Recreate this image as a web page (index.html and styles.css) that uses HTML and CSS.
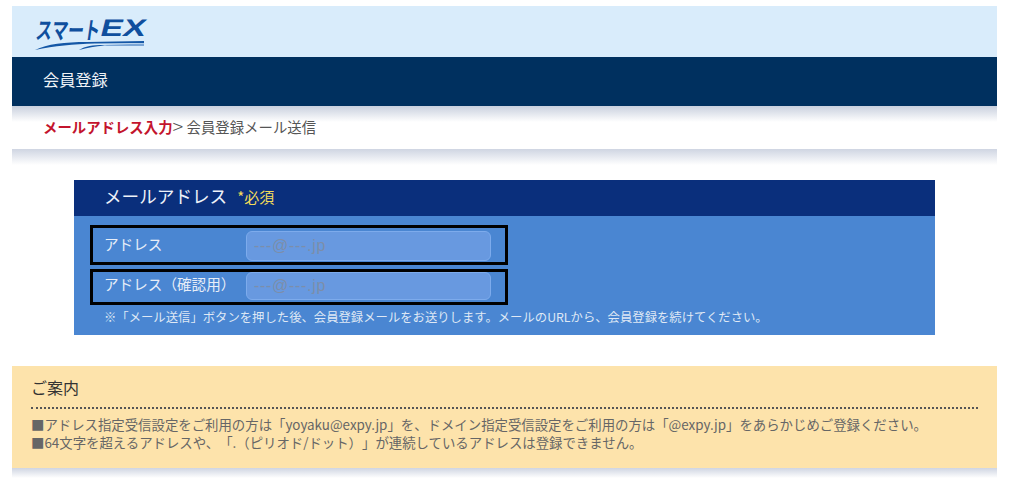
FILE: index.html
```html
<!DOCTYPE html>
<html lang="ja">
<head>
<meta charset="utf-8">
<title>会員登録</title>
<link rel="stylesheet" href="styles.css">
</head>
<body>
<div class="page">
  <header class="brand">
    <svg class="logo" width="112" height="38" viewBox="0 0 112 38" aria-label="スマートEX">
      <text class="logo-kana" transform="translate(0 23.500) skewX(-8) scale(1 1.4)" textLength="64" lengthAdjust="spacingAndGlyphs">スマート</text>
      <text class="logo-ex" transform="translate(64 21) skewX(-14)" textLength="45" lengthAdjust="spacingAndGlyphs">EX</text>
      <path class="logo-swoosh" d="M0 35 C12 29 30 27 52 27 L109 26 L109 28 L60 28.500 C38 29 20 31 0 35Z"/>
      <path class="logo-swoosh" d="M44 35 C50 31 58 30 68 30 L70 30.500 C60 31 52 33 44 35Z"/>
      <path class="logo-swoosh-light" d="M66 30 L109 28.500 L109 31 L78 31 C74 31 70 31 66 30Z"/>
    </svg>
  </header>
  <div class="titlebar">会員登録</div>
  <nav class="steps"><strong class="step-current">メールアドレス入力</strong><span class="step-sep">&gt;</span><span>会員登録メール送信</span></nav>
  <div class="band"></div>
  <section class="card">
    <h2 class="card-head">メールアドレス<span class="required">*必須</span></h2>
    <div class="card-body">
      <div class="field field-first">
        <label class="field-label" for="a1">アドレス</label>
        <input class="field-input" id="a1" type="text" placeholder="---@---.jp">
      </div>
      <div class="field field-second">
        <label class="field-label" for="a2">アドレス（確認用）</label>
        <input class="field-input" id="a2" type="text" placeholder="---@---.jp">
      </div>
      <p class="note">※「メール送信」ボタンを押した後、会員登録メールをお送りします。メールのURLから、会員登録を続けてください。</p>
    </div>
  </section>
  <section class="notice">
    <h3 class="notice-head">ご案内</h3>
    <p class="notice-line">■アドレス指定受信設定をご利用の方は「yoyaku@expy.jp」を、ドメイン指定受信設定をご利用の方は「@expy.jp」をあらかじめご登録ください。</p>
    <p class="notice-line">■64文字を超えるアドレスや、「.（ピリオド/ドット）」が連続しているアドレスは登録できません。</p>
  </section>
  <div class="band band-bottom"></div>
</div>
</body>
</html>
```
FILE: styles.css
```css
* { box-sizing: border-box; }
html, body { margin: 0; height: 100%; overflow: hidden; background: #fff; }
body {
  font-family: "Noto Sans CJK JP", "Noto Sans", sans-serif;
  color: #444;
  text-spacing-trim: space-all;
}
.page { margin: 6px 27px 0 12px; }
.brand { height: 51px; background: #d9ecfb; padding: 9px 0 0 23px; }
.logo { display: block; overflow: visible; }
.logo-kana { font-size: 17px; font-weight: 700; fill: #0f4f9e; }
.logo-ex { font-family: "Liberation Sans", sans-serif; font-size: 24px; font-weight: 700; fill: #0f4f9e; }
.logo-swoosh { fill: #1457a6; }
.logo-swoosh-light { fill: #7ba6d6; }
.titlebar {
  height: 49px;
  background: #00305f;
  color: #eef2f6;
  font-size: 16.2px;
  line-height: 45px;
  padding-left: 31px;
}
.steps {
  display: flex;
  align-items: center;
  height: 43px;
  background: linear-gradient(#c9d0de, #fff 16px);
  font-size: 14.4px;
  padding: 0 0 3px 31px;
  color: #555;
  white-space: nowrap;
}
.step-current { color: #c3142d; font-weight: 700; }
.step-sep { color: #555; font-size: 20px; font-weight: 300; line-height: 20px; width: 14px; }
.band { height: 16px; background: linear-gradient(#cfd5e2, #fff); }
.card { margin: 15px 62px 0; }
.card-head {
  margin: 0;
  height: 36px;
  background: #0a2f7c;
  color: #eef2f8;
  font-size: 17.6px;
  font-weight: 400;
  line-height: 32px;
  padding-left: 30px;
}
.required { color: #f4dc5a; font-size: 15px; margin-left: 10px; }
.card-body { height: 119px; background: #4a86d2; padding: 9px 0 0 16px; }
.field {
  display: flex;
  border: 3px solid #000;
  width: 418px;
}
.field-first { height: 40px; padding: 3px 0 0 11px; }
.field-second { height: 36px; margin-top: 4px; padding: 0 0 0 11px; }
.field-label { width: 142px; color: #e8eef8; font-size: 14.6px; line-height: 26px; white-space: nowrap; }
.field-second .field-label { line-height: 24px; }
.field-input {
  width: 245px;
  height: 30px;
  background: #6899e0;
  border: 1px solid #7dabec;
  border-radius: 6px;
  padding: 0 7px;
  font: 16px "Liberation Sans", sans-serif;
  letter-spacing: 0.7px;
  color: #333;
  outline: none;
}
.field-second .field-input { height: 28px; }
.field-input::placeholder { color: #7c8eaa; opacity: 1; }
.note { margin: 3px 0 0 14px; font-size: 12.35px; line-height: 18px; color: #dfe8f5; white-space: nowrap; }
.notice {
  margin-top: 31px;
  height: 102px;
  background: #fde3ab;
  padding: 8px 19px 0;
}
.notice-head {
  margin: 0 0 6px;
  height: 35px;
  font-size: 16px;
  font-weight: 400;
  line-height: 27px;
  color: #333;
  border-bottom: 2px dotted #555;
}
.notice-line { margin: 0; font-size: 13.4px; line-height: 18px; color: #666; white-space: nowrap; }
.band-bottom { height: 10px; }
```
